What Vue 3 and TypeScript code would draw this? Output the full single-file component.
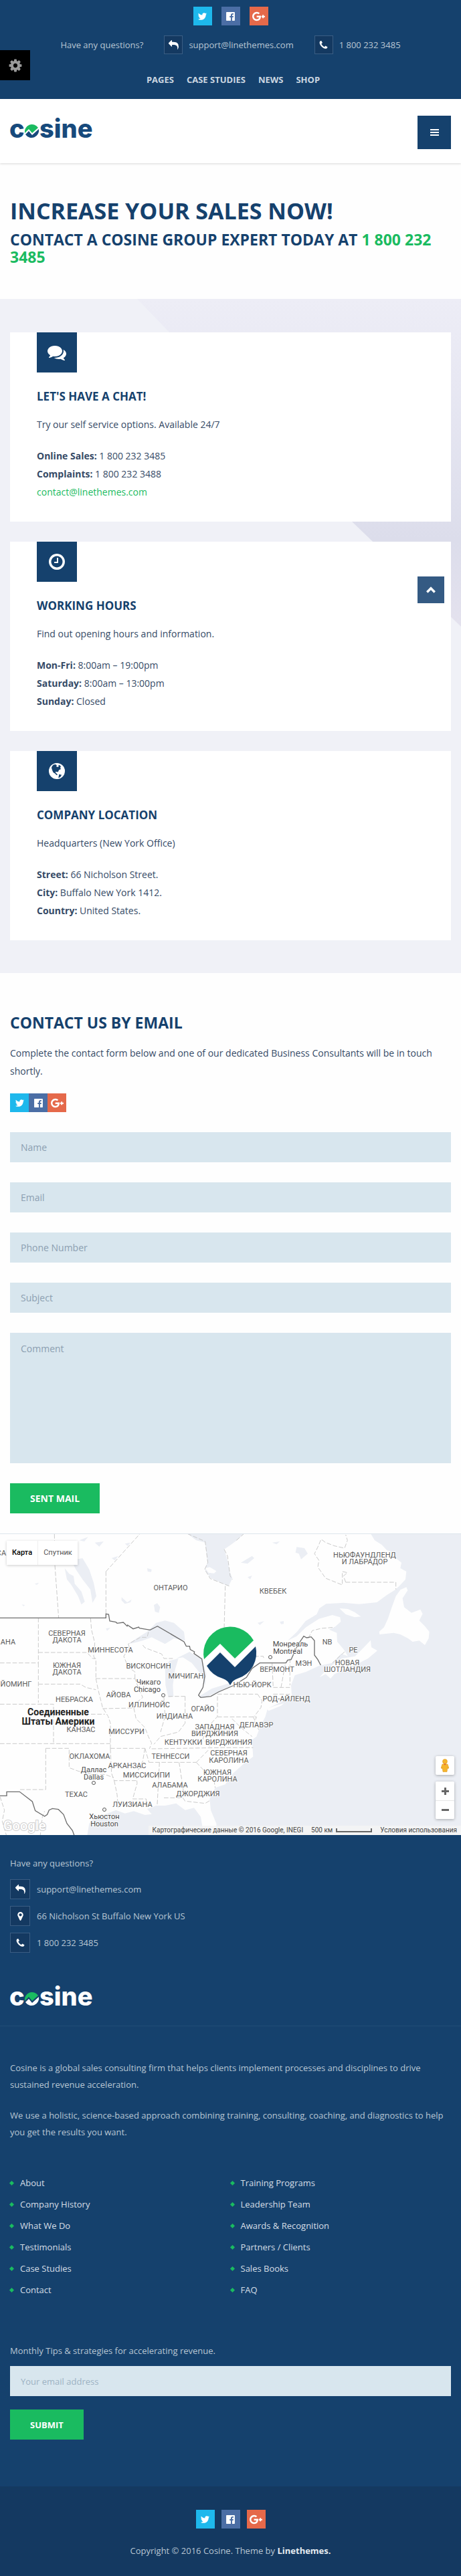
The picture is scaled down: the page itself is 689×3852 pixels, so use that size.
<script setup lang="ts">
import { ref } from 'vue'

type IconShape = { box: string; d: string }

const icons: Record<string, IconShape> = {
  reply: { box: '0 0 1792 1792', d: 'M1792 1120q0 166-127 451-3 7-10.5 24t-13.5 30-13 22q-12 17-28 17-15 0-23.5-10t-8.5-25q0-9 2.5-26.5t2.5-23.5q5-68 5-123 0-112-19.5-200.5t-54-153.5-89-112-117-77-142.5-47.5-158-25-171-7.5h-224v256q0 26-19 45t-45 19-45-19l-512-512q-19-19-19-45t19-45l512-512q19-19 45-19t45 19 19 45v256h224q713 0 875 403 53 134 53 333z' },
  phone: { box: '0 0 1792 1792', d: 'M1600 1240q0 27-10 70.5t-21 68.5q-21 50-122 106-94 51-186 51-27 0-53-3.5t-57.5-12.5-47-14.5-55.5-20.5-49-18q-98-35-175-83-127-79-264-216t-216-264q-48-77-83-175-3-9-18-49t-20.5-55.5-14.5-47-12.5-57.5-3.5-53q0-92 51-186 56-101 106-122 25-11 68.5-21t70.5-10q14 0 21 3 18 6 53 76 11 19 30 54t35 63.5 31 53.5q3 4 17.5 25t21.5 35.5 7 28.5q0 20-28.5 50t-62 55-62 53-28.5 46q0 9 5 22.5t8.5 20.5 14 24 11.5 19q76 137 174 235t235 174q2 1 19 11.5t24 14 20.5 8.5 22.5 5q18 0 46-28.5t53-62 55-62 50-28.5q14 0 28.5 7t35.5 21.5 25 17.5q25 15 53.5 31t63.5 35 54 30q70 35 76 53 3 7 3 21z' },
  marker: { box: '0 0 1792 1792', d: 'M1152 640q0-106-75-181t-181-75-181 75-75 181 75 181 181 75 181-75 75-181zm256 0q0 109-33 179l-364 774q-16 33-47.5 52t-67.5 19-67.5-19-46.5-52l-365-774q-33-70-33-179 0-212 150-362t362-150 362 150 150 362z' },
  clock: { box: '0 0 1792 1792', d: 'M1024 544v448q0 14-9 23t-23 9h-320q-14 0-23-9t-9-23v-64q0-14 9-23t23-9h224v-352q0-14 9-23t23-9h64q14 0 23 9t9 23zm416 352q0-148-73-273t-198-198-273-73-273 73-198 198-73 273 73 273 198 198 273 73 273-73 198-198 73-273zm224 0q0 209-103 385.5t-279.5 279.5-385.5 103-385.5-103-279.5-279.5-103-385.5 103-385.5 279.5-279.5 385.5-103 385.5 103 279.5 279.5 103 385.5z' },
  chat: { box: '0 0 1792 1792', d: 'M1408 768q0 139-94 257t-256.5 186.5-353.5 68.5q-86 0-176-16-124 88-278 128-36 9-86 16h-3q-11 0-20.5-8t-11.5-21q-1-3-1-6.5t.5-6.5 2-6l2.5-5 3.5-5.5 4-5 4.5-5 4-4.5q5-6 23-25t26-29.5 22.5-29 25-38.5 20.5-44q-124-72-195-177t-71-224q0-139 94-257t256.5-186.5 353.5-68.5 353.5 68.5 256.5 186.5 94 257zm384 256q0 120-71 224.5t-195 176.5q10 24 20.5 44t25 38.5 22.5 29 26 29.5 23 25q1 1 4 4.5t4.5 5 4 5 3.5 5.5l2.5 5 2 6 .5 6.5-1 6.5q-3 14-13 22t-22 7q-50-7-86-16-154-40-278-128-90 16-176 16-271 0-472-132 58 4 88 4 161 0 309-45t264-129q125-92 192-212t67-254q0-77-23-152 129 71 204 178t75 230z' },
  cog: { box: '0 0 1792 1792', d: 'M1152 896q0-106-75-181t-181-75-181 75-75 181 75 181 181 75 181-75 75-181zm512-109v222q0 12-8 23t-20 13l-185 28q-19 54-39 91 35 50 107 138 10 12 10 25t-9 23q-27 37-99 108t-94 71q-12 0-26-9l-138-108q-44 23-91 38-16 136-29 186-7 28-36 28h-222q-14 0-24.5-8.5t-11.5-21.5l-28-184q-49-16-90-37l-141 107q-10 9-25 9-14 0-25-11-126-114-165-168-7-10-7-23 0-12 8-23 15-21 51-66.5t54-70.5q-27-50-41-99l-183-27q-13-2-21-12.5t-8-23.5v-222q0-12 8-23t19-13l186-28q14-46 39-92-40-57-107-138-10-12-10-24 0-10 9-23 26-36 98.5-107.5t94.5-71.5q13 0 26 10l138 107q44-23 91-38 16-136 29-186 7-28 36-28h222q14 0 24.5 8.5t11.5 21.5l28 184q49 16 90 37l142-107q9-9 24-9 13 0 25 10 129 119 165 170 7 8 7 22 0 12-8 23-15 21-51 66.5t-54 70.5q26 50 41 98l183 28q13 2 21 12.5t8 23.5z' },
  globe: { box: '0 0 24 24', d: 'M12 0A12 12 0 1 0 12 24A12 12 0 1 0 12 0ZM7 2.500L10 2L12 3.500L11 5L13 6L15 5L14 3.500L16 3L18 5L17 7L18 9L15 10.500L14 13L12 13.500L10.500 12.500L10 14.500L12 16L13 18L11.500 18L9 15.500L6.500 14L5 10.500L4 7L5 4.500ZM15 17L19 17.500L18 20L15.500 22L14 21.500L15 19.500Z' },
  twitter: { box: '0 0 1792 1792', d: 'M1684 408q-67 98-162 167 1 14 1 42 0 130-38 259.5t-115.5 248.5-184.5 210.5-258 146-323 54.5q-271 0-496-145 35 4 78 4 225 0 401-138-105-2-188-64.5t-114-159.5q33 5 61 5 43 0 85-11-112-23-185.5-111.5t-73.5-205.5v-4q68 38 146 41-66-44-105-115t-39-154q0-88 44-163 121 149 294.5 238.5t371.5 99.5q-8-38-8-74 0-134 94.5-228.5t228.5-94.5q140 0 236 102 109-21 205-78-37 115-142 178 93-10 186-50z' },
  facebook: { box: '0 0 1792 1792', d: 'M1579 128q35 0 60 25t25 60v1366q0 35-25 60t-60 25h-391v-595h199l30-232h-229v-148q0-56 23.500-84t91.500-28l122-1v-207q-63-9-178-9-136 0-217.500 80t-81.500 226v171h-200v232h200v595h-735q-35 0-60-25t-25-60v-1366q0-35 25-60t60-25h1366z' },
  google: { box: '0 0 20 14', d: 'M7 0a7 7 0 1 0 0 14c4 0 6.700-2.800 6.700-7.100v-1H7v2.700h3.900C10.400 10.400 9 11.400 7 11.400A4.400 4.400 0 1 1 9.900 3.700L11.900 1.800A7 7 0 0 0 7 0zM16 4.500h2V6.200h2v2h-2v1.700h-2V8.200h-1.500v-2H16z' },
}

const socials = [
  { key: 'twitter', name: 'Twitter' },
  { key: 'facebook', name: 'Facebook' },
  { key: 'google', name: 'Google Plus' },
]

const topNav = ['Pages', 'Case Studies', 'News', 'Shop']

type Line = { label?: string; text: string; link?: boolean }
const cards: { icon: string; title: string; intro: string; lines: Line[] }[] = [
  {
    icon: 'chat',
    title: "Let's have a chat!",
    intro: 'Try our self service options. Available 24/7',
    lines: [
      { label: 'Online Sales:', text: '1 800 232 3485' },
      { label: 'Complaints:', text: '1 800 232 3488' },
      { text: 'contact@linethemes.com', link: true },
    ],
  },
  {
    icon: 'clock',
    title: 'Working hours',
    intro: 'Find out opening hours and information.',
    lines: [
      { label: 'Mon-Fri:', text: '8:00am – 19:00pm' },
      { label: 'Saturday:', text: '8:00am – 13:00pm' },
      { label: 'Sunday:', text: 'Closed' },
    ],
  },
  {
    icon: 'globe',
    title: 'Company location',
    intro: 'Headquarters (New York Office)',
    lines: [
      { label: 'Street:', text: '66 Nicholson Street.' },
      { label: 'City:', text: 'Buffalo New York 1412.' },
      { label: 'Country:', text: 'United States.' },
    ],
  },
]

const fields = [
  { name: 'Name', type: 'text' },
  { name: 'Email', type: 'email' },
  { name: 'Phone Number', type: 'tel' },
  { name: 'Subject', type: 'text' },
]
const values = ref<Record<string, string>>({ Name: '', Email: '', 'Phone Number': '', Subject: '' })
const comment = ref('')
const newsletter = ref('')

const contacts = [
  { icon: 'reply', text: 'support@linethemes.com' },
  { icon: 'marker', text: '66 Nicholson St Buffalo New York US' },
  { icon: 'phone', text: '1 800 232 3485' },
]

const footerLinks = [
  ['About', 'Company History', 'What We Do', 'Testimonials', 'Case Studies', 'Contact'],
  ['Training Programs', 'Leadership Team', 'Awards & Recognition', 'Partners / Clients', 'Sales Books', 'FAQ'],
]

// Region names: text, centre x, baseline y
const regions: [string, number, number][] = [
  ['СА', 2, 32], ['АНА', 12, 165], ['ОНТАРИО', 255, 84], ['СЕВЕРНАЯ', 100, 152], ['ДАКОТА', 100, 162],
  ['МИННЕСОТА', 165, 177], ['ЮЖНАЯ', 100, 200], ['ДАКОТА', 100, 210], ['ВИСКОНСИН', 222, 201],
  ['МИЧИГАН', 278, 216], ['ЙОМИНГ', 24, 228], ['НЬЮФАУНДЛЕНД', 545, 35], ['И ЛАБРАДОР', 545, 45],
  ['КВЕБЕК', 408, 89], ['NB', 489, 165], ['PE', 528, 177], ['МЭН', 454, 197], ['ВЕРМОНТ', 414, 206],
  ['НОВАЯ', 519, 196], ['ШОТЛАНДИЯ', 519, 206], ['НЬЮ-ЙОРК', 377, 229], ['РОД-АЙЛЕНД', 428, 250],
  ['ДЕЛАВЭР', 383, 289], ['НЕБРАСКА', 111, 251], ['АЙОВА', 177, 244], ['ИЛЛИНОЙС', 223, 259],
  ['ОГАЙО', 303, 265], ['ИНДИАНА', 261, 276], ['КАНЗАС', 121, 296], ['МИССУРИ', 189, 299],
  ['ЗАПАДНАЯ', 321, 292], ['ВИРДЖИНИЯ', 321, 302], ['КЕНТУККИ', 274, 315], ['ВИРДЖИНИЯ', 342, 315],
  ['ОКЛАХОМА', 134, 336], ['ТЕННЕССИ', 255, 336], ['СЕВЕРНАЯ', 342, 331], ['КАРОЛИНА', 342, 342],
  ['АРКАНЗАС', 190, 350], ['МИССИСИПИ', 219, 364], ['ЮЖНАЯ', 325, 360], ['КАРОЛИНА', 325, 370],
  ['АЛАБАМА', 254, 379], ['ДЖОРДЖИЯ', 296, 392], ['ТЕХАС', 114, 393], ['ЛУИЗИАНА', 198, 408],
]
const cities: [string, number, number][] = [
  ['Чикаго', 222, 225], ['Chicago', 220, 236], ['Монреаль', 434, 168], ['Montréal', 430, 179],
  ['Даллас', 140, 356], ['Dallas', 140, 367], ['Хьюстон', 156, 426], ['Houston', 156, 437],
]
const cityDots: [number, number][] = [[244, 241], [404, 184], [140, 372], [156, 412]]

const waters = [
  // Atlantic coast, Labrador to Florida
  'M1662 10L1680 40L1712 60L1735 85L1762 95L1775 120L1800 140L1795 165L1822 180L1818 215L1790 245L1772 262L1735 285L1690 318L1610 326L1540 320L1462 325L1432 345L1420 372L1370 402L1332 450L1290 490L1330 470L1372 430L1430 392L1490 375L1525 385L1528 405L1500 430L1475 440L1510 455L1512 495L1542 530L1560 560L1530 548L1490 590L1432 602L1372 630L1322 645L1305 690L1308 735L1265 762L1240 775L1200 795L1190 830L1165 880L1150 920L1130 935L1135 1010L1090 1045L1045 1085L1010 1135L965 1150L940 1200L945 1250L970 1310L975 1370L2067 1370L2067 10Z',
  // Gulf of Mexico
  'M390 1370L400 1310L430 1275L470 1270L520 1250L560 1265L600 1255L650 1272L680 1268L660 1245L700 1230L740 1230L790 1220L830 1250L870 1240L900 1280L915 1370Z',
  // Hudson Bay
  'M840 10L880 40L920 50L930 140L918 170L945 210L1025 245L1042 210L1030 180L1020 130L1005 80L1035 60L1062 40L1092 10Z',
  // Great Lakes
  'M575 505L620 475L660 450L700 410L740 400L780 410L825 450L830 490L780 480L740 505L710 490L680 475L640 490L600 500Z',
  'M740 610L760 580L800 570L785 620L775 690L778 740L755 745L742 690Z',
  'M790 570L850 540L905 575L925 640L920 690L900 640L860 590L820 565ZM930 530L980 560L1010 620L970 640L930 600Z',
  'M890 742L950 705L1030 680L1030 695L960 728L910 748ZM1050 640L1100 610L1120 625L1070 655Z',
  // Lake Winnipeg and its neighbours
  'M320 130L370 120L400 170L420 230L432 290L415 320L405 260L370 215L340 170Z',
  'M290 165L310 190L330 200L335 235L365 270L380 315L365 328L350 290L320 240L300 215Z',
  'M690 330L705 322L718 340L712 365L695 360ZM545 295L570 318L590 305L585 318L560 325L545 310ZM660 165L680 170L678 182L662 180ZM1330 70L1365 75L1380 100L1350 125L1340 100L1325 95ZM1080 140L1130 110L1140 120L1110 145ZM1220 50L1255 45L1240 58ZM1110 205L1130 198L1122 215ZM1155 410L1185 402L1165 420ZM1255 405L1272 402L1272 415L1260 416ZM155 235L175 230L165 240ZM98 328L112 330L105 336ZM355 40L395 25L378 45ZM425 50L465 45L445 68ZM500 120L530 110L515 130ZM560 55L585 50L572 65ZM475 435L495 432L480 446Z',
]
const islands = [
  'M1822 250L1828 265L1805 300L1812 340L1845 365L1885 350L1895 370L1880 400L1905 425L1925 450L1922 480L1905 510L1880 490L1850 495L1830 480L1795 462L1765 455L1702 462L1700 450L1722 430L1740 390L1755 345L1775 290L1795 262Z',
  'M1522 345L1560 348L1590 362L1618 382L1590 385L1550 372Z',
  'M1432 655L1472 612L1532 570L1592 560L1632 520L1662 488L1665 520L1692 535L1650 570L1602 595L1552 615L1500 640L1482 660L1460 640Z',
  'M920 165L940 160L970 178L960 188L935 185Z',
  'M1195 795L1240 780L1275 770L1260 782L1205 805Z',
]
const stateLines = 'M244 12L246 150L263 388M475 180L628 10M475 180V370M1010 245L1005 440M840 10L920 45L932 140L918 170L943 212L1028 245M1005 80L1020 110L1032 200L1042 215M1060 40L1092 12M172 388V590M0 590H172M172 590V768M172 543H390L415 570L430 570M172 685H360L385 700L430 710M406 388L410 440L425 500L420 560L430 580V660M430 660H605M605 660V630L575 610L555 560L580 520L575 505L630 475L660 475L668 440M640 510L650 522L725 550L735 570L775 570M0 775H240V952M240 820H470M0 952H495M430 660L440 710L460 790L485 830L495 860V975M460 795L600 792L610 770L640 745L620 700L605 660M600 792L610 840L650 880L665 920L680 950L670 975M495 973H650M650 973L640 1030L610 1090M205 973H310V1060L350 1075L410 1090L470 1090L510 1105M205 973V1158H85M495 975L500 1085L512 1118H610M512 1118L525 1180L530 1240M610 1090L615 1130L595 1200L655 1200L660 1230M668 1036L880 1036M680 975L1000 970L1135 970M650 973L668 1036M715 1036L705 1225M735 1195H820L830 1210L920 1220L945 1205M803 1036L825 1180M880 1036L960 1120L965 1150M880 1036L935 980M755 740H830M830 740V860M830 860L800 900L720 920L690 955M735 745L740 830L720 900M975 740V830L930 880L910 930L940 965M975 730H1032L1155 730M975 832H1150L1140 860M1155 730L1175 760L1170 790L1140 830M1135 830L1160 890M1040 840L1080 880L1130 920M1220 590L1225 700M1260 700L1280 590L1300 570V690M1225 700H1300M1225 730H1300M1140 560L1180 560L1185 575M1382 480L1400 445L1440 435L1500 430M1550 228H1775V260M1550 228L1540 200L1558 185L1535 180L1535 240L1460 210L1425 160L1430 130L1410 100L1425 70L1440 35L1460 50L1500 65L1545 75L1558 40L1550 15M1490 590L1545 540M0 1190L20 1250L10 1300L30 1368M180 1370L190 1280L200 1255'
const nationLine = 'M0 388H475V370L487 372L492 402L520 407L525 412L553 408L570 425L572 420L597 437L622 429L625 434L673 442L706 425L825 495L835 515L850 515L853 530L872 540L870 548L905 572L918 650L910 700L890 735L900 745L945 740L980 720L1050 690L1105 655L1130 615L1165 590H1282L1290 577L1305 575L1335 510L1362 470L1375 477L1395 473L1410 490V555L1425 575L1438 600M0 1186H30V1168H88L145 1212L158 1253L200 1278L212 1270L220 1250L235 1243L262 1247L285 1270L300 1310L325 1342L335 1370'
</script>

<template>
  <div class="page">
    <button class="settings" type="button" aria-label="Settings">
      <svg :viewBox="icons.cog.box" aria-hidden="true"><path :d="icons.cog.d" /></svg>
    </button>
    <a class="to-top" href="#top" aria-label="Back to top">
      <svg viewBox="0 0 14 14" aria-hidden="true"><path d="M2 10L7 5L12 10" /></svg>
    </a>

    <div id="top" class="topbar">
      <div class="socials wide">
        <a v-for="s in socials" :key="s.key" href="#" :class="s.key" :aria-label="s.name">
          <svg :viewBox="icons[s.key].box" aria-hidden="true"><path :d="icons[s.key].d" /></svg>
        </a>
      </div>
      <div class="top-contact">
        <span>Have any questions?</span>
        <a href="#"><i class="box"><svg :viewBox="icons.reply.box" aria-hidden="true"><path :d="icons.reply.d" /></svg></i>support@linethemes.com</a>
        <a href="#"><i class="box"><svg :viewBox="icons.phone.box" aria-hidden="true"><path :d="icons.phone.d" /></svg></i>1 800 232 3485</a>
      </div>
      <nav class="top-nav">
        <a v-for="n in topNav" :key="n" href="#">{{ n }}</a>
      </nav>
    </div>

    <header class="header">
      <a class="logo" href="#" aria-label="cosine">
        <svg viewBox="0 0 124 38" aria-hidden="true">
          <text x="-1" y="33">c</text>
          <path class="hill" d="M22 26A11 11 0 0 1 42 18L33 26L28 20Z" />
          <path class="bowl" d="M23 28L28 23L33 29L43 20A11 11 0 0 1 23 28Z" />
          <text x="44" y="33">sine</text>
        </svg>
      </a>
      <button class="menu" type="button" aria-label="Menu"><span></span><span></span><span></span></button>
    </header>

    <section class="hero">
      <h1>Increase your sales now!</h1>
      <p>Contact a Cosine Group expert today at <a href="#">1 800 232 3485</a></p>
    </section>

    <section class="cards">
      <article v-for="c in cards" :key="c.title" class="card">
        <div class="card-icon"><svg :viewBox="icons[c.icon].box" :class="c.icon" aria-hidden="true"><path fill-rule="evenodd" :d="icons[c.icon].d" /></svg></div>
        <h2>{{ c.title }}</h2>
        <p>{{ c.intro }}</p>
        <ul>
          <li v-for="l in c.lines" :key="l.text">
            <a v-if="l.link" href="#">{{ l.text }}</a>
            <template v-else><strong>{{ l.label }}</strong> {{ l.text }}</template>
          </li>
        </ul>
      </article>
    </section>

    <section class="email">
      <h2>Contact us by email</h2>
      <p>Complete the contact form below and one of our dedicated Business Consultants will be in touch shortly.</p>
      <div class="socials joined">
        <a v-for="s in socials" :key="s.key" href="#" :class="s.key" :aria-label="s.name">
          <svg :viewBox="icons[s.key].box" aria-hidden="true"><path :d="icons[s.key].d" /></svg>
        </a>
      </div>
      <form @submit.prevent>
        <input v-for="f in fields" :key="f.name" v-model="values[f.name]" :type="f.type" :placeholder="f.name" :aria-label="f.name" />
        <textarea v-model="comment" placeholder="Comment" aria-label="Comment"></textarea>
        <button class="send" type="submit">Sent mail</button>
      </form>
    </section>

    <section class="map" aria-label="Map">
      <svg class="map-canvas" viewBox="0 0 689 450" preserveAspectRatio="xMidYMid slice">
        <g transform="translate(0 -4) scale(.33333)">
          <path v-for="(d, i) in waters" :key="'w' + i" class="water" :d="d" />
          <path v-for="(d, i) in islands" :key="'i' + i" class="land" :d="d" />
          <path class="state" :d="stateLines" />
          <path class="nation" :d="nationLine" />
        </g>
        <circle v-for="(p, i) in cityDots" :key="'c' + i" class="dot" :cx="p[0]" :cy="p[1]" r="2.500" />
        <text v-for="(r, i) in regions" :key="'r' + i" class="region" :x="r[1]" :y="r[2]">{{ r[0] }}</text>
        <text v-for="(c, i) in cities" :key="'t' + i" class="city" :x="c[1]" :y="c[2]">{{ c[0] }}</text>
        <text class="country" x="87" y="271">Соединенные</text>
        <text class="country" x="87" y="285">Штаты Америки</text>
        <text class="brand" x="5" y="443">Google</text>
        <circle class="pin-base" cx="344" cy="178" r="39" />
        <path class="hill" d="M305 187L329 164L351 186L379 159A40 40 0 0 0 305 187Z" />
        <path class="bowl" d="M309 197L329 177L351 199L382 168A40 40 0 0 1 355 216Q348 218 344 226Q340 218 333 216A40 40 0 0 1 309 197Z" />
      </svg>
      <div class="map-type">
        <button type="button" class="active">Карта</button>
        <button type="button">Спутник</button>
      </div>
      <div class="map-tools">
        <button type="button" class="pegman" aria-label="Street View">
          <svg viewBox="0 0 12 20" aria-hidden="true">
            <circle cx="6" cy="4" r="3.500" />
            <path d="M2 8H10L12 14L10 14.500V13L9 19.500H3L2 13V14.500L0 14Z" />
            <path class="collar" d="M4 7.500H8L6 9.500Z" />
          </svg>
        </button>
        <div class="zoom">
          <button type="button" aria-label="Zoom in"><svg viewBox="0 0 11 11" aria-hidden="true"><path d="M4 0H7V4H11V7H7V11H4V7H0V4H4Z" /></svg></button>
          <button type="button" aria-label="Zoom out"><svg viewBox="0 0 11 11" aria-hidden="true"><path d="M0 4H11V7H0Z" /></svg></button>
        </div>
      </div>
      <div class="map-legal">
        <span>Картографические данные © 2016 Google, INEGI</span>
        <span class="scale">500 км <i></i></span>
        <a href="#">Условия использования</a>
      </div>
    </section>

    <footer class="footer">
      <div class="foot-top">
        <p>Have any questions?</p>
        <ul>
          <li v-for="c in contacts" :key="c.icon">
            <i class="box"><svg :viewBox="icons[c.icon].box" aria-hidden="true"><path :d="icons[c.icon].d" /></svg></i>{{ c.text }}
          </li>
        </ul>
        <a class="logo light" href="#" aria-label="cosine">
          <svg viewBox="0 0 124 38" aria-hidden="true">
            <text x="-1" y="33">c</text>
            <path class="hill" d="M22 26A11 11 0 0 1 42 18L33 26L28 20Z" />
            <path class="bowl" d="M23 28L28 23L33 29L43 20A11 11 0 0 1 23 28Z" />
            <text x="44" y="33">sine</text>
          </svg>
        </a>
      </div>
      <div class="foot-main">
        <p>Cosine is a global sales consulting firm that helps clients implement processes and disciplines to drive sustained revenue acceleration.</p>
        <p>We use a holistic, science-based approach combining training, consulting, coaching, and diagnostics to help you get the results you want.</p>
        <div class="links">
          <ul v-for="(col, i) in footerLinks" :key="i">
            <li v-for="l in col" :key="l"><a href="#">{{ l }}</a></li>
          </ul>
        </div>
        <form class="newsletter" @submit.prevent>
          <label for="newsletter">Monthly Tips &amp; strategies for accelerating revenue.</label>
          <input id="newsletter" v-model="newsletter" type="email" placeholder="Your email address" />
          <button class="send small" type="submit">Submit</button>
        </form>
      </div>
      <div class="foot-bottom">
        <div class="socials near">
          <a v-for="s in socials" :key="s.key" href="#" :class="s.key" :aria-label="s.name">
            <svg :viewBox="icons[s.key].box" aria-hidden="true"><path :d="icons[s.key].d" /></svg>
          </a>
        </div>
        <p>Copyright © 2016 Cosine. Theme by <a href="#">Linethemes.</a></p>
      </div>
    </footer>
  </div>
</template>

<style>
body {
  margin: 0;
}
</style>

<style scoped>
.page {
  position: relative;
  background: #fefefe;
  color: #354a66;
  font: 14px/27px "Open Sans", "Noto Sans", sans-serif;
}
.page * {
  box-sizing: border-box;
}
h1, h2, p, ul {
  margin: 0;
  padding: 0;
}
ul {
  list-style: none;
}
a {
  color: inherit;
  text-decoration: none;
}
button {
  border: 0;
  padding: 0;
  cursor: pointer;
}
svg {
  display: block;
}

.settings {
  position: absolute;
  left: 0;
  top: 75px;
  width: 45px;
  height: 45px;
  display: grid;
  place-items: center;
  background: #000;
}
.settings svg {
  width: 22px;
  height: 22px;
  fill: #9a9a9a;
}
.to-top {
  position: absolute;
  right: 25px;
  top: 862px;
  z-index: 2;
  width: 40px;
  height: 40px;
  display: grid;
  place-items: center;
  background: #345a83;
}
.to-top svg {
  width: 16px;
  height: 16px;
  fill: none;
  stroke: #fff;
  stroke-width: 3;
}

.socials {
  display: flex;
  justify-content: center;
}
.socials.wide {
  gap: 14px;
}
.socials.near {
  gap: 10px;
}
.socials.joined {
  justify-content: flex-start;
}
.socials a {
  width: 28px;
  height: 28px;
  display: grid;
  place-items: center;
}
.socials svg {
  width: 15px;
  height: 15px;
  fill: #fff;
}
.socials .google svg {
  width: 19px;
}
.twitter { background: #1eb8ec; }
.facebook { background: #4b6ea5; }
.google { background: #e5694a; }

.topbar {
  padding: 10px 15px 15px;
  background: #15416d;
  color: #b8c6d3;
  font-size: 13px;
}
.top-contact {
  margin-top: 15px;
  display: flex;
  justify-content: center;
  align-items: center;
  gap: 31px;
}
.top-contact a {
  display: flex;
  align-items: center;
  gap: 9px;
}
.box {
  width: 28px;
  height: 28px;
  display: grid;
  place-items: center;
  border: 1px solid #3a5d83;
  background: #143961;
}
.box svg {
  width: 15px;
  height: 15px;
  fill: #fff;
}
.top-nav {
  margin-top: 25px;
  padding-left: 8px;
  display: flex;
  justify-content: center;
  gap: 19px;
  font-weight: 700;
  text-transform: uppercase;
  color: #ccd7e1;
}

.header {
  padding: 25px 15px 21px;
  display: flex;
  align-items: flex-start;
  justify-content: space-between;
  background: #fff;
  box-shadow: 0 1px 3px rgba(0, 0, 0, 0.15);
}
.logo svg {
  width: 124px;
  height: 38px;
  overflow: visible;
}
.logo text {
  font: 800 38px Inter, "Open Sans", sans-serif;
  fill: #174a7c;
}
.logo .bowl {
  fill: #174a7c;
}
.hill {
  fill: #1abb60;
}
.light text,
.light .bowl {
  fill: #fff;
}
.menu {
  width: 50px;
  height: 50px;
  display: flex;
  flex-direction: column;
  align-items: center;
  justify-content: center;
  gap: 2px;
  background: #15416d;
}
.menu span {
  width: 13px;
  height: 2px;
  background: #fff;
}

.hero {
  padding: 48px 15px 50px;
  color: #15416d;
  text-transform: uppercase;
}
.hero h1 {
  font-size: 34px;
  line-height: 46px;
  font-weight: 700;
}
.hero p {
  margin-top: 7px;
  font-size: 23px;
  line-height: 26px;
  font-weight: 700;
}
.hero a {
  color: #1abb60;
}

.cards {
  position: relative;
  padding: 50px 15px 49px;
  display: flex;
  flex-direction: column;
  gap: 30px;
  background: #f0f1f7;
}
.cards::before {
  content: "";
  position: absolute;
  inset: 0;
  clip-path: polygon(205px 0, 100% 0, 100% 490px, 525px 332px);
  background: linear-gradient(#ededf6 0, #e8e8f3 120px, #dcddeb 360px, #e4e2ee 490px);
}
.card {
  position: relative;
  padding: 0 40px 31px;
  background: #fff;
}
.card-icon {
  width: 60px;
  height: 60px;
  display: grid;
  place-items: center;
  background: #15416d;
}
.card-icon svg {
  width: 28px;
  height: 28px;
  fill: #fff;
}
.card-icon .globe {
  width: 24px;
  height: 24px;
}
.card h2 {
  margin: 24px 0 16px;
  font-size: 17px;
  line-height: 24px;
  font-weight: 700;
  text-transform: uppercase;
  color: #15416d;
}
.card ul {
  margin-top: 20px;
}
.card strong {
  font-weight: 700;
}
.card a {
  color: #1abb60;
}

.email {
  padding: 58px 15px 30px;
}
.email h2 {
  margin-bottom: 16px;
  font-size: 23px;
  line-height: 32px;
  font-weight: 700;
  text-transform: uppercase;
  color: #15416d;
}
.email .socials {
  margin: 20px 0 30px;
}
form {
  display: flex;
  flex-direction: column;
  align-items: stretch;
  gap: 30px;
}
input,
textarea {
  width: 100%;
  height: 45px;
  margin: 0;
  padding: 0 16px;
  border: 0;
  border-radius: 0;
  background: #d8e6ee;
  color: #354a66;
  font: 14px/24px "Open Sans", "Noto Sans", sans-serif;
}
textarea {
  height: 195px;
  padding: 12px 16px;
  resize: none;
  display: block;
}
input::placeholder,
textarea::placeholder {
  color: #8c9fb1;
  opacity: 1;
}
.send {
  align-self: flex-start;
  height: 45px;
  padding: 0 30px;
  background: #1abb60;
  color: #fff;
  font: 700 14px/24px "Open Sans", "Noto Sans", sans-serif;
  text-transform: uppercase;
}
.send.small {
  font-size: 13px;
}

.map {
  position: relative;
  border-top: 1px solid #dde5ed;
  overflow: hidden;
  font: 11px/14px Roboto, "Open Sans", sans-serif;
}
.map-canvas {
  width: 100%;
  height: 450px;
  background: #fefefe;
}
.water { fill: #ebeef4; }
.land { fill: #fefefe; }
.state {
  fill: none;
  stroke: #cacaca;
  stroke-width: 3;
  stroke-dasharray: 20 8;
}
.nation {
  fill: none;
  stroke: #6e6e6e;
  stroke-width: 4;
}
.dot {
  fill: #fff;
  stroke: #555;
}
.region,
.city,
.country {
  text-anchor: middle;
  fill: #5c5c5c;
  paint-order: stroke;
  stroke: #fefefe;
  stroke-width: 2;
  stroke-opacity: 0.7;
}
.city {
  fill: #4a4a4a;
}
.country {
  font-size: 14px;
  font-weight: 700;
  fill: #222;
}
.brand {
  font-size: 20px;
  font-weight: 500;
  fill: #fff;
  paint-order: stroke;
  stroke: #cfcfcf;
  stroke-width: 2;
}
.pin-base { fill: #fff; }
.map .bowl { fill: #15416d; }
.map-type {
  position: absolute;
  left: 10px;
  top: 10px;
  display: flex;
  box-shadow: 0 1px 4px rgba(0, 0, 0, 0.2);
}
.map button {
  background: #fff;
  color: #565656;
  font: 11px/14px Roboto, "Open Sans", sans-serif;
}
.map-type button {
  height: 36px;
  padding: 0 8px;
}
.map-type button + button {
  border-left: 1px solid #eee;
}
.map .active {
  color: #000;
  font-weight: 500;
}
.map-tools {
  position: absolute;
  right: 10px;
  bottom: 24px;
  width: 28px;
  display: flex;
  flex-direction: column;
  gap: 10px;
}
.map-tools button {
  width: 28px;
  height: 28px;
  display: grid;
  place-items: center;
  border-radius: 2px;
}
.pegman,
.zoom {
  box-shadow: 0 1px 4px rgba(0, 0, 0, 0.3);
  border-radius: 2px;
}
.pegman svg {
  width: 12px;
  height: 20px;
  fill: #f5b52e;
  stroke: #d9941c;
  stroke-width: 0.5;
}
.pegman .collar {
  fill: #e5552d;
  stroke: none;
}
.zoom svg {
  width: 11px;
  height: 11px;
  fill: #666;
}
.zoom button + button {
  border-top: 1px solid #e6e6e6;
}
.map-legal {
  position: absolute;
  right: 0;
  bottom: 0;
  display: flex;
  font-size: 10px;
  color: #444;
  background: rgba(245, 245, 245, 0.8);
}
.map-legal > * {
  padding: 0 6px;
}
.scale {
  display: flex;
  align-items: center;
  gap: 5px;
}
.scale i {
  width: 54px;
  height: 6px;
  border: 2px solid #666;
  border-top: 0;
}

.footer {
  background: #15416d;
  color: #b8c6d3;
  font-size: 13px;
  line-height: 25px;
}
.foot-top {
  padding: 30px 15px 25px;
  border-bottom: 1px solid #214c77;
}
.foot-top ul {
  margin: 11px 0 46px;
  display: grid;
  gap: 10px;
}
.foot-top li {
  display: flex;
  align-items: center;
  gap: 10px;
}
.foot-top .box {
  width: 30px;
  height: 30px;
}
.logo {
  display: block;
}
.foot-main {
  padding: 50px 15px 70px;
}
.foot-main p + p {
  margin-top: 21px;
}
.links {
  margin-top: 47px;
  display: grid;
  grid-template-columns: 1fr 1fr;
  color: #d5dee6;
}
.links li {
  position: relative;
  padding-left: 15px;
  line-height: 32px;
}
.links li::before {
  content: "";
  position: absolute;
  left: 0;
  top: 14px;
  width: 5px;
  height: 5px;
  background: #1abb60;
  transform: rotate(45deg);
}
.newsletter {
  margin-top: 63px;
  gap: 20px;
}
.newsletter label {
  margin-bottom: -10px;
}
.newsletter input {
  font-size: 13px;
}
.newsletter input::placeholder {
  color: #9db2c3;
}
.foot-bottom {
  padding: 35px 15px 25px;
  background: #143961;
  text-align: center;
}
.foot-bottom p {
  margin-top: 21px;
}
.foot-bottom p a {
  font-weight: 700;
  color: #e6ecf1;
}
</style>
